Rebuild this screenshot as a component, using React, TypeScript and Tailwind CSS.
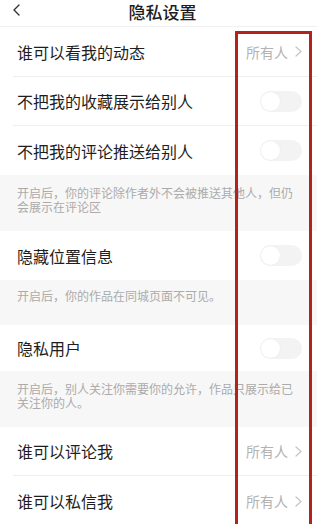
import React from "react";

const font = { fontFamily: '"Noto Sans CJK SC", "Noto Sans", sans-serif' };

function Chevron() {
  return (
    <svg width="7" height="11" viewBox="0 0 7 11" fill="none" className="ml-[7px]">
      <polyline points="1,1 6,5.5 1,10" stroke="#c4c4c4" strokeWidth="1.2" strokeLinecap="round" strokeLinejoin="round" />
    </svg>
  );
}

function Toggle() {
  return (
    <div className="w-[42px] h-[21px] rounded-full bg-[#f3f3f3] flex items-center pl-[1px]">
      <div className="w-[19px] h-[19px] rounded-full bg-white shadow-[0_0_2px_rgba(0,0,0,0.06)]" />
    </div>
  );
}

function Row({ label, right, divider = true, h = "h-[49px]" }: { label: string; right: React.ReactNode; divider?: boolean; h?: string }) {
  return (
    <div className={`ml-[13px] pl-[4px] pr-[15px] flex items-center justify-between ${h} ${divider ? "border-b border-[#efefef]" : ""}`}>
      <span className="text-[16px] text-[#1e1e1e] leading-[22px]">{label}</span>
      {right}
    </div>
  );
}

function Everyone() {
  return (
    <div className="flex items-center">
      <span className="text-[14px] text-[#b2b2b2] leading-[20px]">所有人</span>
      <Chevron />
    </div>
  );
}

function Desc({ children }: { children: React.ReactNode }) {
  return (
    <div className="bg-[#f7f7f7] pl-[17px] pr-[18px] pt-[11px] pb-[17px] text-[12px] leading-[14px] text-[#ababab]">
      {children}
    </div>
  );
}

export default function App() {
  return (
    <div className="relative w-[333px] h-[524px] bg-white overflow-hidden" style={font}>
      <div className="w-[317px]">
        <div className="grid grid-cols-[1fr_auto_1fr] h-[27px] border-b border-[#f0f0f0]">
          <div className="flex items-start pl-[12px] pt-[4px]">
            <svg width="9" height="12" viewBox="0 0 9 12" fill="none">
              <polyline points="7,1 2,6 7,11" stroke="#333" strokeWidth="1.4" strokeLinecap="round" strokeLinejoin="round" />
            </svg>
          </div>
          <div className="text-[17px] font-medium text-[#1e1e1e] leading-[24px] pl-[8px]">隐私设置</div>
          <div />
        </div>
        <Row label="谁可以看我的动态" right={<Everyone />} h="h-[50px]" />
        <Row label="不把我的收藏展示给别人" right={<Toggle />} />
        <Row label="不把我的评论推送给别人" right={<Toggle />} divider={false} />
        <Desc>
          开启后，你的评论除作者外不会被推送其他人，但仍
          <br />
          会展示在评论区
        </Desc>
        <Row label="隐藏位置信息" right={<Toggle />} divider={false} />
        <div className="bg-[#f7f7f7] pl-[17px] pt-[9px] pb-[22px] text-[12px] leading-[14px] text-[#ababab]">
          开启后，你的作品在同城页面不可见。
        </div>
        <Row label="隐私用户" right={<Toggle />} divider={false} h="h-[46px]" />
        <Desc>
          开启后，别人关注你需要你的允许，作品只展示给已
          <br />
          关注你的人。
        </Desc>
        <Row label="谁可以评论我" right={<Everyone />} />
        <Row label="谁可以私信我" right={<Everyone />} divider={false} h="h-[50px]" />
      </div>
      <div className="absolute left-[235px] top-[31px] w-[77px] h-[520px] border-[3.5px] border-[#b3231e]" />
    </div>
  );
}
